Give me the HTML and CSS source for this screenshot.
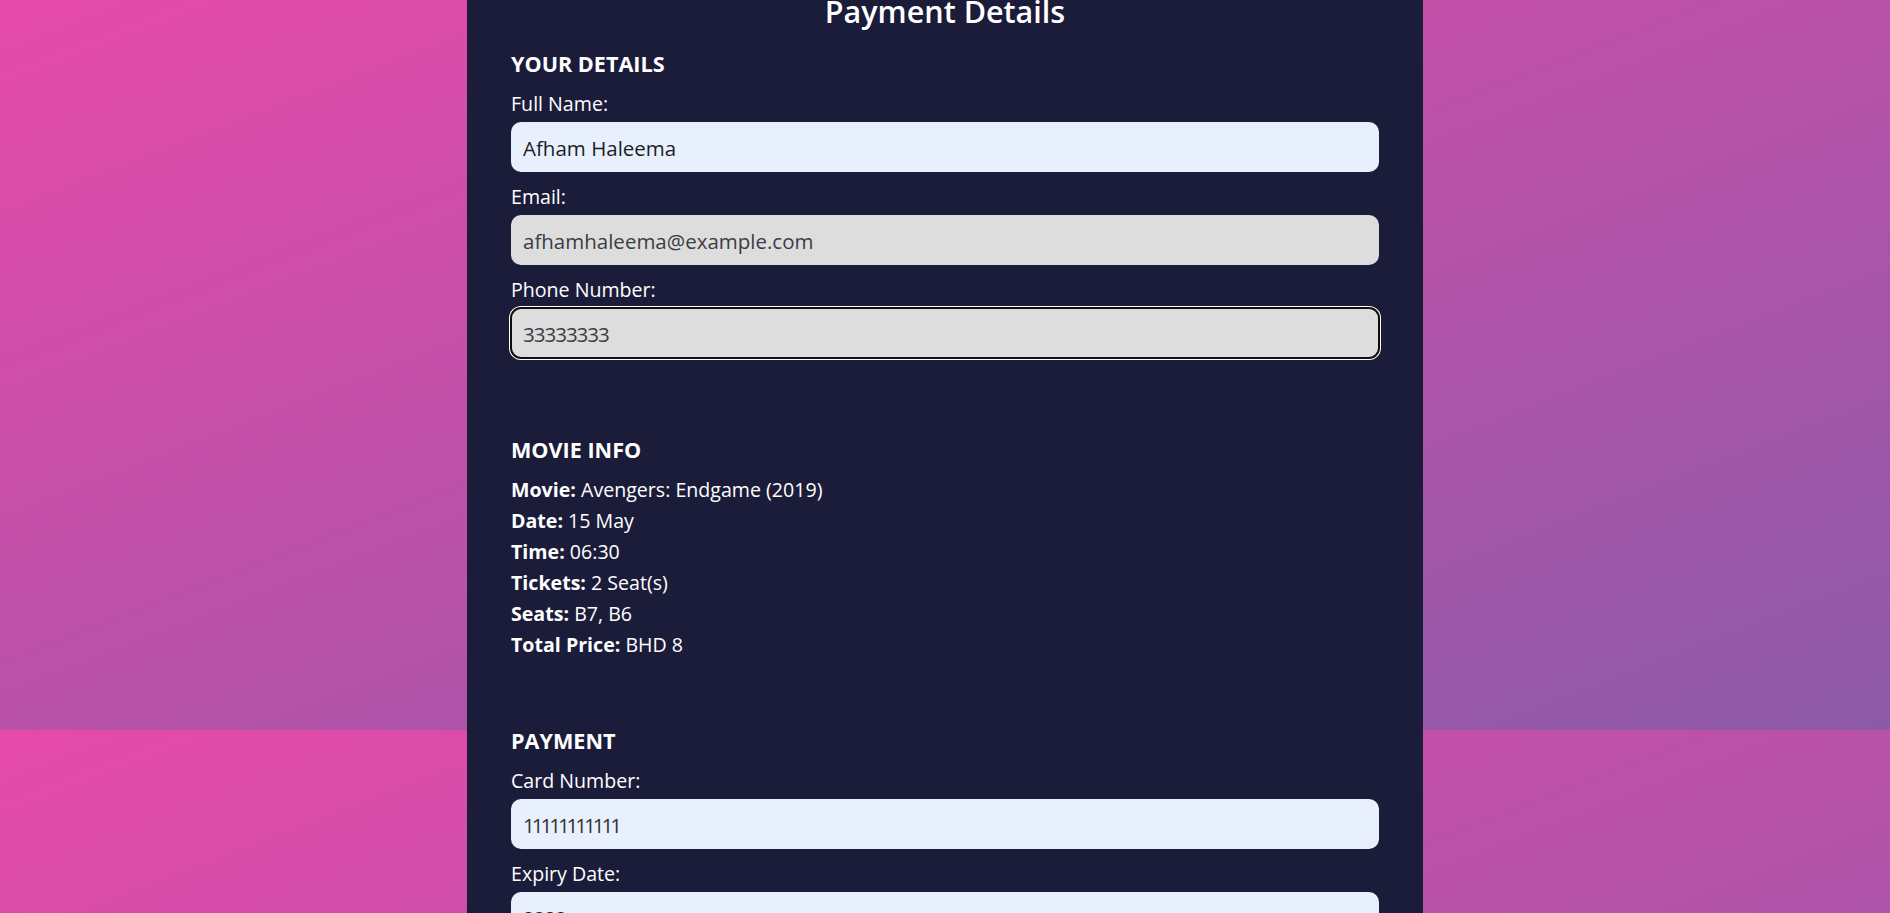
FILE: index.html
```html
<!DOCTYPE html>
<html lang="en">
<head>
<meta charset="utf-8">
<title>Payment Details</title>
<link rel="stylesheet" href="styles.css">
</head>
<body>
  <main class="panel">
    <h1 class="title">Payment Details</h1>
    <form class="form">
      <section class="section">
        <h3 class="section-title">YOUR DETAILS</h3>
        <div class="field">
          <label class="label" for="name">Full Name:</label>
          <input class="input input-autofill" id="name" type="text" value="Afham Haleema">
        </div>
        <div class="field">
          <label class="label" for="email">Email:</label>
          <input class="input input-readonly" id="email" type="text" value="afhamhaleema@example.com" readonly>
        </div>
        <div class="field">
          <label class="label" for="phone">Phone Number:</label>
          <input class="input input-readonly input-focus digits" id="phone" type="text" value="33333333" readonly>
        </div>
      </section>

      <section class="section section-info">
        <h3 class="section-title section-title-info">MOVIE INFO</h3>
        <p class="info"><strong>Movie:</strong> Avengers: Endgame (2019)</p>
        <p class="info"><strong>Date:</strong> 15 May</p>
        <p class="info"><strong>Time:</strong> 06:30</p>
        <p class="info"><strong>Tickets:</strong> 2 Seat(s)</p>
        <p class="info"><strong>Seats:</strong> B7, B6</p>
        <p class="info"><strong>Total Price:</strong> BHD 8</p>
      </section>

      <section class="section section-payment">
        <h3 class="section-title">PAYMENT</h3>
        <div class="field">
          <label class="label" for="card">Card Number:</label>
          <input class="input input-autofill digits-narrow" id="card" type="text" value="11111111111">
        </div>
        <div class="field">
          <label class="label" for="expiry">Expiry Date:</label>
          <input class="input input-autofill digits" id="expiry" type="text" value="2222">
        </div>
      </section>
    </form>
  </main>
</body>
</html>
```
FILE: styles.css
```css
html {
  background: linear-gradient(to bottom right, #e64aa9, #8c5aa8) 0 0 / 100% 730px repeat;
}

body {
  margin: 0;
  height: 100vh;
  overflow: hidden;
  font-family: "Open Sans", "Liberation Sans", sans-serif;
  color: #ffffff;
}

.panel {
  box-sizing: border-box;
  width: 956px;
  margin: -40px auto 0;
  padding: 31px 44px 40px;
  background: #1b1c3a;
}

.title {
  margin: 0 0 19px;
  font-size: 30.5px;
  line-height: 40px;
  font-weight: 600;
  text-align: center;
}

.form {
  display: flex;
  flex-direction: column;
}

.section {
  display: flex;
  flex-direction: column;
}

.section-info {
  margin-top: 78px;
}

.section-payment {
  margin-top: 67px;
}

.section-title {
  margin: 0 0 14px;
  font-size: 21.6px;
  line-height: 28px;
  font-weight: 700;
}

.section-title-info {
  margin-bottom: 10px;
}

.field {
  display: flex;
  flex-direction: column;
}

.field + .field {
  margin-top: 13px;
}

.label {
  margin-bottom: 6px;
  font-size: 19.6px;
  line-height: 24px;
}

.input {
  box-sizing: border-box;
  width: 100%;
  height: 50px;
  padding: 2px 12px 0;
  border: none;
  border-radius: 10px;
  font-family: inherit;
  font-size: 20.5px;
  color: #1e1e1e;
}

.input-autofill {
  background: #e8f0fe;
}

.input-readonly {
  background: #dddddd;
  color: #3c3c44;
}

.input-focus {
  outline: 2px solid #101010;
  outline-offset: -1px;
  box-shadow: 0 0 0 2px #ffffff;
}

.digits {
  letter-spacing: -1px;
}

.digits-narrow {
  letter-spacing: -3px;
  color: #333333;
}

.info {
  margin: 0;
  font-size: 19.6px;
  line-height: 31px;
}

.info strong {
  font-weight: 700;
}
```
